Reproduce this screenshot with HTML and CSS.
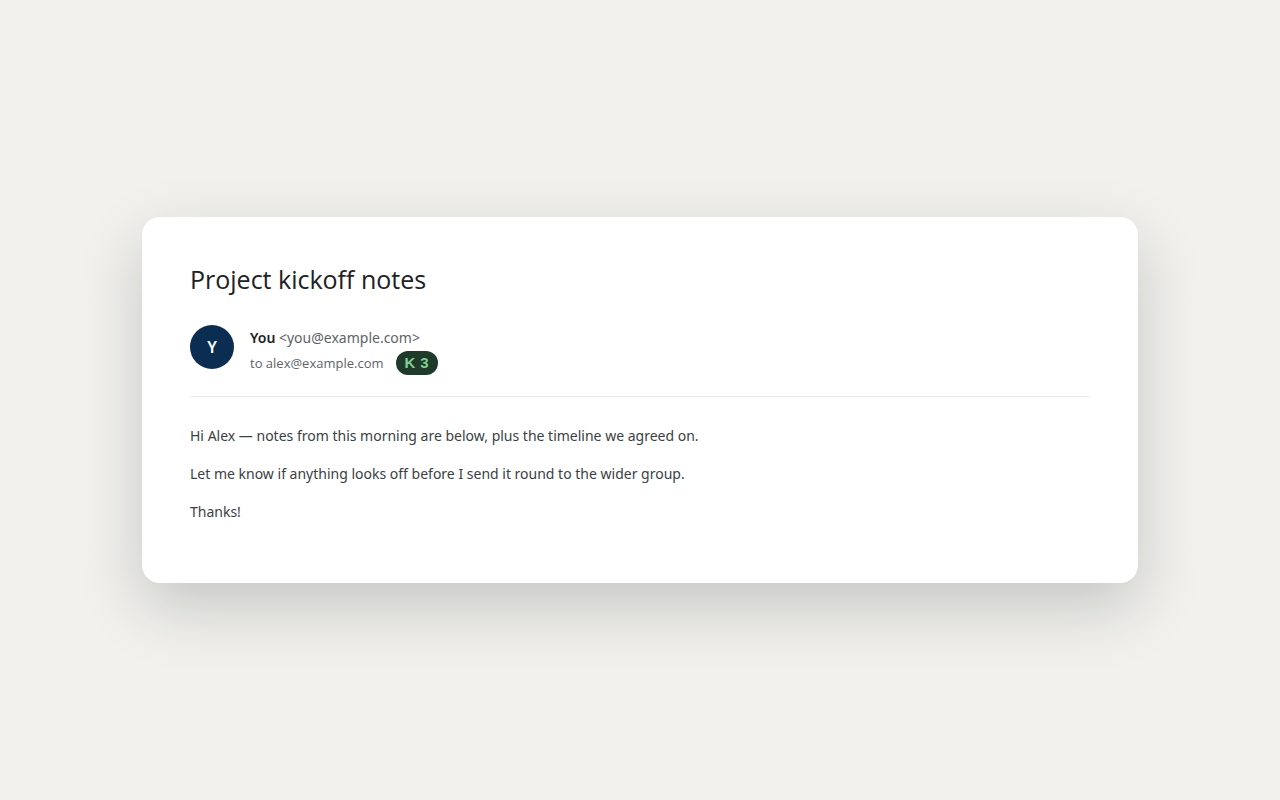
FILE: index.html
```html
<!DOCTYPE html>
<html lang="en">
<head>
    <meta charset="UTF-8">
    <meta name="viewport" content="width=device-width, initial-scale=1.0">
    <title>Project kickoff notes</title>
    <link rel="stylesheet" href="styles.css">
</head>
<body>

    <main class="mail">
        <h1 class="subject">Project kickoff notes</h1>

        <!-- Sender and recipient -->
        <header class="meta">
            <div class="avatar">Y</div>
            <div class="people">
                <div class="from"><strong>You</strong> <span class="address">&lt;you@example.com&gt;</span></div>
                <div class="to">
                    <span>to alex@example.com</span>
                    <span class="badge"><span>K</span> <span>3</span></span>
                </div>
            </div>
        </header>

        <!-- Message -->
        <div class="body">
            <p>Hi Alex — notes from this morning are below, plus the timeline we agreed on.</p>
            <p>Let me know if anything looks off before I send it round to the wider group.</p>
            <p>Thanks!</p>
        </div>
    </main>

</body>
</html>
```
FILE: styles.css
```css
* {
    margin: 0;
    padding: 0;
    box-sizing: border-box;
}

body {
    font-family: "Segoe UI", "Noto Sans", sans-serif;
    background-color: #f2f1ed;
    color: #202124;
    display: flex;
    justify-content: center;
    align-items: center;
    min-height: 100vh;
}

.mail {
    width: 100%;
    max-width: 996px;
    padding: 44px 48px;
    background-color: #fff;
    border-radius: 18px;
    box-shadow: 0 24px 64px rgba(20, 30, 40, 0.2);
}

.subject {
    font-family: "Segoe UI", "Open Sans", sans-serif;
    font-size: 25px;
    font-weight: 400;
    line-height: 36px;
    margin-bottom: 28px;
}

/* Sender row */
.meta {
    display: flex;
    align-items: flex-start;
    gap: 16px;
    padding-bottom: 21px;
    border-bottom: 1px solid #e8eaed;
}

.avatar {
    display: flex;
    justify-content: center;
    align-items: center;
    width: 44px;
    height: 44px;
    border-radius: 50%;
    background-color: #0b2d52;
    color: #fff;
    font-size: 16px;
    font-weight: 600;
}

.from {
    font-size: 14px;
    line-height: 26px;
}

.from strong {
    font-weight: 600;
}

.address {
    color: #5f6368;
}

.to {
    display: flex;
    align-items: center;
    gap: 12px;
    color: #5f6368;
    font-family: "Segoe UI", "Open Sans", sans-serif;
    font-size: 13px;
    line-height: 24px;
}

.badge {
    display: flex;
    gap: 5px;
    padding: 0 9px;
    border-radius: 12px;
    background-color: #1f3a2a;
    color: #7fd08f;
    font-family: "Liberation Sans", Arial, sans-serif;
    font-size: 15px;
    font-weight: 700;
}

/* Message text */
.body {
    padding-top: 28px;
    color: #3c4043;
    font-size: 14px;
    line-height: 22px;
}

.body p {
    margin-bottom: 16px;
}
```
